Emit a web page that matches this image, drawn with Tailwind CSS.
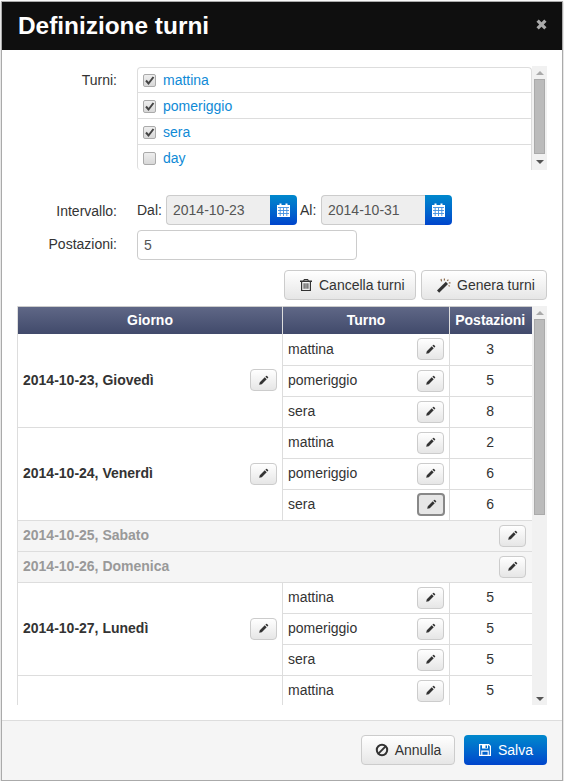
<!DOCTYPE html>
<html lang="it">
<head>
<meta charset="UTF-8">
<title>Definizione turni</title>
<script src="https://cdn.jsdelivr.net/npm/@tailwindcss/browser@4"></script>
</head>
<body class="bg-white font-['Liberation_Sans',Arial,sans-serif] text-[14px] text-[#333]">

<svg class="hidden">
  <symbol id="pencil" viewBox="0 0 14 14"><path d="M1.5 12.5 L2.3 9.2 L8.6 2.9 L11.1 5.4 L4.8 11.7 Z M9.4 2.1 L10.3 1.2 Q10.9 .7 11.5 1.2 L12.8 2.5 Q13.3 3.1 12.8 3.7 L11.9 4.6 Z" fill="currentColor"/></symbol>
  <symbol id="calendar" viewBox="0 0 13 14"><path d="M0 2 H2.5 V.5 H4.5 V2 H8.5 V.5 H10.5 V2 H13 V14 H0 Z" fill="#fff"/><path d="M1 4.5 H12 M1 7.5 H12 M1 10.5 H12 M3.2 4.5 V13 M6.5 4.5 V13 M9.8 4.5 V13" stroke="#3f8fe0" stroke-width=".9" fill="none"/></symbol>
</svg>

<div class="ml-px mt-px w-[562px] h-[780px] border border-[#aaa] shadow-[0_1px_2px_rgba(0,0,0,0.3)] flex flex-col">
  <!-- Header -->
  <div class="h-[48px] shrink-0 bg-[#0f0f0f] flex items-center justify-between pl-[16px] pr-[15px]">
    <h3 class="text-[24.4px] leading-[48px] font-bold text-white">Definizione turni</h3>
    <svg class="w-[11px] h-[11px] text-[#aaa] mb-[3px]" viewBox="0 0 11 11"><path d="M1.6 1.6 L9.4 9.4 M9.4 1.6 L1.6 9.4" stroke="currentColor" stroke-width="3.2"/></svg>
  </div>

  <!-- Body -->
  <div class="flex-1 pl-[16px] pr-[15px] pt-[16px]">
    <div class="flex">
      <label class="w-[99px] text-right pt-[4px] leading-[20px]">Turni:</label>
      <div class="ml-[20px] w-[410px] h-[104px] flex">
        <div class="mt-px w-[395px] h-[103px] border-t border-l border-r border-[#ddd] rounded-t-[4px] rounded-bl-[4px] overflow-hidden" id="turni"></div>
        <div class="w-[15px] h-[104px] bg-[#f1f1f1] flex flex-col items-center">
          <div class="h-[13px] flex items-center"><div class="w-0 h-0 border-x-[4px] border-x-transparent border-b-[4px] border-b-[#aaa]"></div></div>
          <div class="w-[11px] h-[75px] bg-[#bbb] border border-[#aaa]"></div>
          <div class="flex-1 flex items-center"><div class="w-0 h-0 border-x-[4px] border-x-transparent border-t-[4px] border-t-[#555]"></div></div>
        </div>
      </div>
    </div>

    <div class="flex mt-[25px]">
      <label class="w-[99px] text-right pt-[6px] leading-[20px]">Intervallo:</label>
      <div class="ml-[20px] flex">
        <span class="w-[29px] pt-[5px] leading-[20px]">Dal:</span>
        <div class="flex w-[131px] h-[30px]">
          <div class="w-[104px] border border-[#ccc] border-r-0 rounded-l-[4px] bg-[#eee] text-[#555] px-[6px] leading-[28px]">2014-10-23</div>
          <div class="w-[27px] rounded-r-[4px] bg-gradient-to-b from-[#0088cc] to-[#0044cc] flex items-center justify-center"><svg class="w-[13px] h-[14px]"><use href="#calendar"/></svg></div>
        </div>
        <span class="w-[24px] pl-[3px] pt-[5px] leading-[20px]">Al:</span>
        <div class="flex w-[131px] h-[30px]">
          <div class="w-[104px] border border-[#ccc] border-r-0 rounded-l-[4px] bg-[#eee] text-[#555] px-[6px] leading-[28px]">2014-10-31</div>
          <div class="w-[27px] rounded-r-[4px] bg-gradient-to-b from-[#0088cc] to-[#0044cc] flex items-center justify-center"><svg class="w-[13px] h-[14px]"><use href="#calendar"/></svg></div>
        </div>
      </div>
    </div>

    <div class="flex mt-[5px]">
      <label class="w-[99px] text-right pt-[4px] leading-[20px]">Postazioni:</label>
      <div class="ml-[20px] w-[220px] h-[30px] border border-[#ccc] rounded-[4px] text-[#555] px-[6px] leading-[28px]">5</div>
    </div>

    <div class="flex justify-end gap-[5px] mt-[10px]">
      <button class="w-[132px] h-[30px] flex items-center pl-[14px] gap-[6px] border border-[#ccc] rounded-[4px] bg-gradient-to-b from-white to-[#e6e6e6]">
        <svg class="w-[14px] h-[14px]" viewBox="0 0 14 14"><path fill-rule="evenodd" d="M5 1 H9 L9.8 2.6 H13 V4 H12 V13 H2 V4 H1 V2.6 H4.2 Z M3.2 4 V12 H10.8 V4 Z M5.2 2.6 H8.8 L8.4 1.9 H5.6 Z M4.6 5.2 H5.6 V10.8 H4.6 Z M6.5 5.2 H7.5 V10.8 H6.5 Z M8.4 5.2 H9.4 V10.8 H8.4 Z" fill="#333"/></svg>
        Cancella turni
      </button>
      <button class="w-[126px] h-[30px] flex items-center pl-[14px] gap-[6px] border border-[#ccc] rounded-[4px] bg-gradient-to-b from-white to-[#e6e6e6]">
        <svg class="w-[15px] h-[15px]" viewBox="0 0 15 15"><path d="M1 12.5 L9.8 3.7 L12 5.9 L3.2 14.7 Z" fill="#333"/><path d="M5 1 L5.6 3.4 M8.4 .6 L8.4 2.6 M12.4 1.6 L11.2 2.8 M14.5 4.8 L12.8 4.8 M13.6 8.4 L12.6 7.4" stroke="#8a6a4c" stroke-width="1.2" fill="none"/></svg>
        Genera turni
      </button>
    </div>

    <div class="flex mt-[6px] h-[399px]">
      <div class="-ml-px w-[515px] h-[399px] overflow-hidden">
        <table class="table-fixed w-[515px] border-collapse">
          <colgroup><col class="w-[265px]"><col class="w-[167px]"><col class="w-[83px]"></colgroup>
          <thead>
            <tr class="h-[28px] bg-[linear-gradient(#ccc_1px,#5f6786_1px,#414a6b)] text-white font-bold">
              <th class="p-0 border-l border-r border-[#ddd]">Giorno</th>
              <th class="p-0 border-r border-[#ddd]">Turno</th>
              <th class="p-0 pr-[2px]">Postazioni</th>
            </tr>
          </thead>
          <tbody id="giorni"></tbody>
        </table>
      </div>
      <div class="w-[15px] h-[399px] bg-[#f1f1f1] flex flex-col items-center">
        <div class="h-[13px] flex items-center"><div class="w-0 h-0 border-x-[4px] border-x-transparent border-b-[4px] border-b-[#aaa]"></div></div>
        <div class="w-[11px] h-[196px] bg-[#bbb] border border-[#aaa]"></div>
        <div class="flex-1 flex items-end pb-[4px]"><div class="w-0 h-0 border-x-[4px] border-x-transparent border-t-[4px] border-t-[#555]"></div></div>
      </div>
    </div>
  </div>

  <!-- Footer -->
  <div class="h-[60px] shrink-0 bg-[#f5f5f5] border-t border-[#ddd] flex justify-end items-start gap-[9px] pt-[14px] pr-[15px]">
    <button class="w-[94px] h-[30px] flex items-center justify-center gap-[6px] border border-[#ccc] rounded-[4px] bg-gradient-to-b from-white to-[#e6e6e6]">
      <svg class="w-[14px] h-[14px]" viewBox="0 0 14 14"><circle cx="7" cy="7" r="5.2" fill="none" stroke="#333" stroke-width="2"/><path d="M3.4 10.6 L10.6 3.4" stroke="#333" stroke-width="2"/></svg>
      Annulla
    </button>
    <button class="w-[83px] h-[30px] flex items-center justify-center gap-[6px] rounded-[4px] bg-gradient-to-b from-[#0088cc] to-[#0044cc] text-white">
      <svg class="w-[14px] h-[14px]" viewBox="0 0 14 14"><path fill-rule="evenodd" d="M1 1 H11 L13 3 V13 H1 Z M2.2 2.2 V11.8 H3.2 V7.5 H10.8 V11.8 H11.8 V3.5 L10.5 2.2 H10 V5.6 H4 V2.2 Z M4.4 8.7 V11.8 H9.6 V8.7 Z M7.5 2.6 V5 H9 V2.6 Z" fill="#fff"/></svg>
      Salva
    </button>
  </div>
</div>

<script>
  const turni = ['mattina', 'pomeriggio', 'sera', 'day'];
  document.getElementById('turni').innerHTML = turni.map((t, i) => `
    <div class="${i > 0 ? 'h-[26px] border-t border-[#ddd] pt-px' : 'h-[24px]'} flex items-center pl-[5px]">
      <span class="w-[13px] h-[13px] rounded-[2px] border border-[#aaa] bg-gradient-to-b from-[#eee] to-[#d8d8d8] flex items-center justify-center">
        ${i < 3 ? '<svg class="w-[11px] h-[11px]" viewBox="0 0 11 11"><path d="M2 5.5 L4.5 8.5 L9.5 2" fill="none" stroke="#444" stroke-width="2"/></svg>' : ''}
      </span>
      <span class="ml-[7px] text-[#0f8ad6]">${t}</span>
    </div>`).join('');

  function matita(pos) {
    const stile = pos === 'attivo'
      ? 'w-[28px] h-[23px] -mr-px border-2 border-[#888] bg-[#e6e6e6]'
      : 'w-[27px] h-[22px] border border-[#ccc] bg-gradient-to-b from-white to-[#e6e6e6]';
    return `<span class="rounded-[4px] ${stile} inline-flex items-center justify-center text-[#333]"><svg class="w-[11px] h-[11px]"><use href="#pencil"/></svg></span>`;
  }

  const giorni = [
    { data: '2014-10-23, Giovedì', post: [3, 5, 8] },
    { data: '2014-10-24, Venerdì', post: [2, 6, 6] },
    { data: '2014-10-25, Sabato' },
    { data: '2014-10-26, Domenica' },
    { data: '2014-10-27, Lunedì', post: [5, 5, 5] },
    { data: '', post: [5, 5, 5] },
  ];
  const nomi = ['mattina', 'pomeriggio', 'sera'];
  let righe = '';
  giorni.forEach((g, k) => {
    if (!g.post) {
      righe += `<tr class="h-[31px] bg-[#f5f5f5] border-b border-[#ddd]">
        <td colspan="3" class="p-0 border-l border-[#ddd]"><div class="flex items-center justify-between pl-[5px] pr-[7px]"><b class="text-[#999]">${g.data}</b>${matita()}</div></td></tr>`;
      return;
    }
    g.post.forEach((p, i) => {
      righe += `<tr class="h-[31px] ${i === 2 ? 'border-b border-[#ddd]' : ''}">`;
      if (i === 0) {
        righe += `<td rowspan="3" class="p-0 border-l border-r border-[#ddd]">${g.data ? `<div class="flex items-center justify-between pl-[5px] pr-[5px]"><b>${g.data}</b>${matita()}</div>` : ''}</td>`;
      }
      const attivo = k === 1 && i === 2 ? 'attivo' : '';
      righe += `<td class="p-0 border-r border-[#ddd] ${i < 2 ? 'border-b' : ''}"><div class="flex items-center justify-between pl-[5px] pr-[5px]"><span>${nomi[i]}</span>${matita(attivo)}</div></td>
        <td class="p-0 pr-[2px] text-center ${i < 2 ? 'border-b border-[#ddd]' : ''}">${p}</td></tr>`;
    });
  });
  document.getElementById('giorni').innerHTML = righe;
</script>
</body>
</html>
